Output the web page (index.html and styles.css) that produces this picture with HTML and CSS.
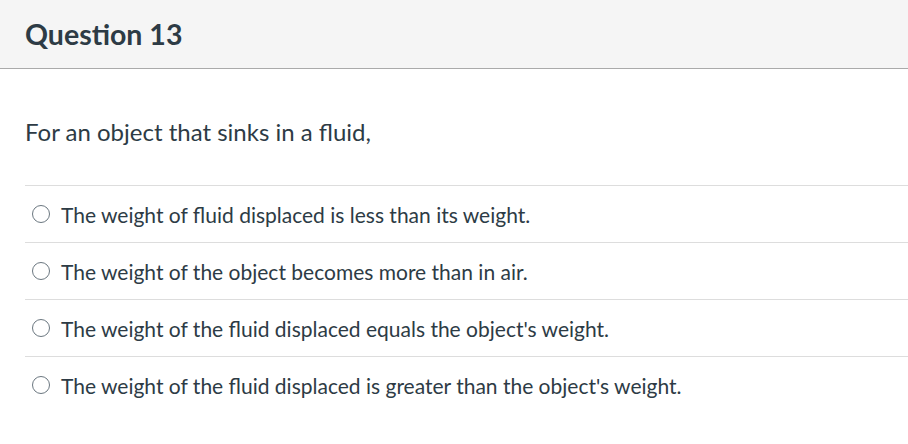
FILE: index.html
```html
<!DOCTYPE html>
<html>
<head>
<meta charset="utf-8">
<link rel="stylesheet" href="styles.css">
</head>
<body>
<div class="header"><h2 class="title">Question 13</h2></div>
<div class="content">
  <p class="question">For an object that sinks in a fluid,</p>
  <div class="answers">
    <label class="answer"><span class="radio"></span><span class="text">The weight of fluid displaced is less than its weight.</span></label>
    <label class="answer"><span class="radio"></span><span class="text">The weight of the object becomes more than in air.</span></label>
    <label class="answer"><span class="radio"></span><span class="text">The weight of the fluid displaced equals the object's weight.</span></label>
    <label class="answer"><span class="radio"></span><span class="text">The weight of the fluid displaced is greater than the object's weight.</span></label>
  </div>
</div>
</body>
</html>
```
FILE: styles.css
```css
html, body { margin: 0; padding: 0; background: #fff; }
body { font-family: Lato, "Open Sans", sans-serif; color: #2d3b45; }
.header {
  height: 68px;
  background: #f5f5f5;
  border-bottom: 1px solid #aaaaaa;
  display: flex;
  align-items: center;
  padding-left: 25px;
}
.title { margin: 0; font-size: 28.5px; font-weight: 700; color: #2d3b45; }
.content { padding: 0 0 0 25px; }
.question { margin: 0; padding-top: 48px; height: 68px; font-size: 24px; line-height: 30px; }
.answers { display: flex; flex-direction: column; }
.answer {
  display: flex;
  align-items: center;
  height: 56px;
  border-top: 1px solid #dddddd;
  font-size: 21px;
}
.radio {
  width: 16px; height: 16px;
  border: 1.5px solid #6b7780;
  border-radius: 50%;
  margin-left: 6.5px;
  margin-right: 11.5px;
  box-sizing: content-box;
  flex-shrink: 0;
}
```
